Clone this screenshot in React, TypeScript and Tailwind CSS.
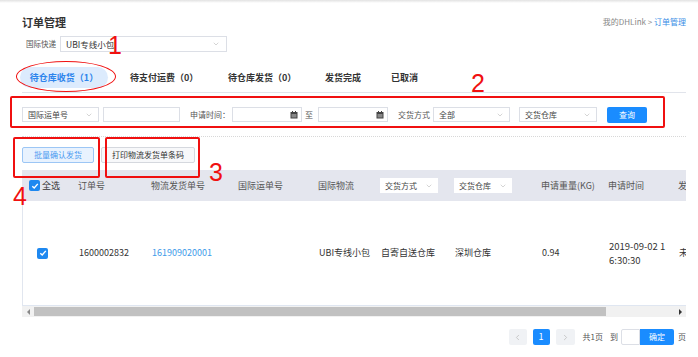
import React from "react";
import { ChevronDown, ChevronLeft, ChevronRight } from "lucide-react";

const Chev = () => <ChevronDown size={8} strokeWidth={1.5} color="#aaa" />;

const Cal = () => (
  <svg width="8" height="8" viewBox="0 0 8 8">
    <rect x="0.5" y="1" width="7" height="6.5" fill="#444" />
    <rect x="1.5" y="3" width="5" height="3.5" fill="#888" />
    <rect x="2" y="0" width="1" height="2" fill="#444" />
    <rect x="5" y="0" width="1" height="2" fill="#444" />
  </svg>
);

const Check = ({ size = 11 }: { size?: number }) => (
  <div
    className="flex items-center justify-center rounded-[2px] bg-[#1e88f0]"
    style={{ width: size, height: size }}
  >
    <svg width="8" height="8" viewBox="0 0 8 8">
      <path d="M1.3 4.2 L3.2 6 L6.8 1.9" stroke="#fff" strokeWidth="1.4" fill="none" />
    </svg>
  </div>
);

const Select = ({ w, text, cls = "" }: { w: string; text: string; cls?: string }) => (
  <div className={`flex h-full items-center justify-between border border-[#dcdfe6] bg-white pl-[5px] pr-[5px] ${w} ${cls}`}>
    <span className="text-[8px] leading-none text-[#444]">{text}</span>
    <Chev />
  </div>
);

const DateInput = () => (
  <div className="flex h-full w-[70px] items-center justify-end border border-[#dcdfe6] bg-white pr-[3px]">
    <Cal />
  </div>
);

const cols = [56, 73, 87, 80, 62, 74, 87, 67, 70, 60];

export default function App() {
  return (
    <div className="relative h-[357px] w-[698px] overflow-hidden bg-white font-['Noto_Sans_CJK_SC','Noto_Sans',sans-serif] text-[#333]">
      <div className="h-[3px] bg-linear-to-b from-[#e2e2e2] to-white" />
      <div className="pl-[22px] pr-[12px]">
        {/* title row */}
        <div className="mt-[11px] flex h-[16px] items-center justify-between">
          <span className="text-[11px] font-bold leading-none text-[#333]">订单管理</span>
          <span className="text-[8px] leading-none text-[#888]">
            我的DHLink &gt; <span className="text-[#3a8ee6]">订单管理</span>
          </span>
        </div>
        {/* express row */}
        <div className="mt-[6px] flex h-[16px] items-center pl-[4px]">
          <span className="w-[34px] text-[7.5px] leading-none text-[#555]">国际快递</span>
          <div className="flex h-full w-[167px] items-center justify-between border border-[#dcdfe6] pl-[5px] pr-[6px]">
            <span className="text-[8.5px] leading-none text-[#333]">UBI专线小包</span>
            <Chev />
          </div>
        </div>
        {/* tabs */}
        <div className="mt-[15px] flex h-[21px] items-center text-[9px] font-bold">
          <div className="-ml-[2px] flex h-full w-[88px] items-center justify-center rounded-full bg-[#dcebfd] text-[#2d84ec]">
            待仓库收货（1）
          </div>
          <div className="ml-[22px] w-[98px]">待支付运费（0）</div>
          <div className="w-[97px]">待仓库发货（0）</div>
          <div className="w-[66px]">发货完成</div>
          <div>已取消</div>
        </div>
        <div className="mt-[4px] h-px bg-[#e1e4eb]" />
        {/* filter row */}
        <div className="mt-[14px] flex h-[15px] items-center text-[8px] text-[#555]">
          <Select w="w-[77px]" text="国际运单号" />
          <div className="ml-[4px] h-full w-[77px] border border-[#dcdfe6]" />
          <span className="ml-[10px] w-[42px] leading-none">申请时间：</span>
          <DateInput />
          <span className="ml-[3px] w-[13px] leading-none">至</span>
          <DateInput />
          <span className="ml-[10px] w-[35px] leading-none">交货方式</span>
          <Select w="w-[77px]" text="全部" />
          <Select w="w-[78px]" text="交货仓库" cls="ml-[9px]" />
          <div className="ml-[10px] flex h-[16px] w-[40px] items-center justify-center rounded-[2px] bg-[#1a8cff] text-[8px] text-white">
            查询
          </div>
        </div>
        <div className="mt-[14px] border-t border-dotted border-[#d8d8d8]" />
        {/* actions */}
        <div className="mt-[10px] flex h-[16px] items-center text-[8px]">
          <div className="flex h-full w-[72px] items-center justify-center rounded-[2px] border border-[#9cc6f5] bg-[#e8f2fe] text-[#4a9af0]">
            批量确认发货
          </div>
          <div className="ml-[7px] flex h-full w-[94px] items-center justify-center rounded-[2px] border border-[#d5d8de] bg-[#f7f8fa] text-[#333]">
            打印物流发货单条码
          </div>
        </div>
        {/* table */}
        <div className="mt-[7px] w-full overflow-hidden">
          <div className="flex h-[31px] w-[720px] items-center bg-[#e4e6ee] text-[9px] text-[#555]">
            <div className="flex items-center gap-[2px] pl-[7px]" style={{ width: cols[0] }}>
              <Check />
              <span className="text-[#333]">全选</span>
            </div>
            <div style={{ width: cols[1] }}>订单号</div>
            <div style={{ width: cols[2] }}>物流发货单号</div>
            <div style={{ width: cols[3] }}>国际运单号</div>
            <div style={{ width: cols[4] }}>国际物流</div>
            <div style={{ width: cols[5] }}>
              <div className="flex h-[15px] w-[58px] items-center justify-between bg-white pl-[5px] pr-[5px] text-[8px] text-[#444]">
                交货方式 <Chev />
              </div>
            </div>
            <div style={{ width: cols[6] }}>
              <div className="flex h-[15px] w-[58px] items-center justify-between bg-white pl-[5px] pr-[5px] text-[8px] text-[#444]">
                交货仓库 <Chev />
              </div>
            </div>
            <div style={{ width: cols[7] }}>申请重量(KG)</div>
            <div style={{ width: cols[8] }}>申请时间</div>
            <div style={{ width: cols[9] }}>发货状态</div>
          </div>
          <div className="flex h-[104px] w-[720px] items-center border-l border-[#e1e6ef] text-[9px] text-[#333]">
            <div className="pl-[14px]" style={{ width: cols[0] }}>
              <Check />
            </div>
            <div style={{ width: cols[1] }}>1600002832</div>
            <div className="text-[#3d9be9]" style={{ width: cols[2] }}>161909020001</div>
            <div style={{ width: cols[3] }}></div>
            <div style={{ width: cols[4] }}>UBI专线小包</div>
            <div style={{ width: cols[5] }}>自寄自送仓库</div>
            <div style={{ width: cols[6] }}>深圳仓库</div>
            <div style={{ width: cols[7] }}>0.94</div>
            <div style={{ width: cols[8] }}>
              <div className="w-[60px] break-all text-[9.5px] leading-[14px]">2019-09-02 16:30:30</div>
            </div>
            <div style={{ width: cols[9] }}>未发货</div>
          </div>
          <div className="h-px bg-[#dfe6f1]" />
          {/* fake scrollbar */}
          <div className="flex h-[11px] items-center bg-[#f1f1f1]">
            <div className="flex h-full w-[12px] items-center justify-center">
              <div className="h-0 w-0 border-y-[3px] border-r-[3px] border-y-transparent border-r-[#888]" />
            </div>
            <div className="h-[9px] w-[572px] bg-[#c1c1c1]" />
            <div className="flex-1" />
            <div className="flex h-full w-[12px] items-center justify-center">
              <div className="h-0 w-0 border-y-[3px] border-l-[3px] border-y-transparent border-l-[#333]" />
            </div>
          </div>
        </div>
        {/* pagination */}
        <div className="mt-[12px] flex h-[16px] items-center justify-end text-[8px] text-[#555]">
          <div className="flex h-full w-[18px] items-center justify-center rounded-[2px] bg-[#f0f2f5]">
            <ChevronLeft size={9} color="#bbb" />
          </div>
          <div className="ml-[6px] flex h-full w-[17px] items-center justify-center rounded-[2px] bg-[#1a8cff] text-[9px] text-white">
            1
          </div>
          <div className="ml-[6px] flex h-full w-[19px] items-center justify-center rounded-[2px] bg-[#f0f2f5]">
            <ChevronRight size={9} color="#bbb" />
          </div>
          <span className="ml-[8px]">共1页</span>
          <span className="ml-[7px]">到</span>
          <div className="ml-[3px] h-full w-[19px] rounded-l-[2px] border border-[#dcdfe6]" />
          <div className="flex h-full w-[34px] items-center justify-center rounded-r-[2px] bg-[#1a8cff] text-white">
            确定
          </div>
          <span className="ml-[4px]">页</span>
        </div>
      </div>

      {/* annotations */}
      <div className="absolute left-[16px] top-[61px] h-[31px] w-[100px] rounded-[50%] border-[1.5px] border-[#f01010]" />
      <div className="absolute left-[10px] top-[96px] h-[32px] w-[655px] rounded-[2px] border-2 border-[#f01010]" />
      <div className="absolute left-[13px] top-[137px] h-[41px] w-[87px] rounded-[2px] border-2 border-[#f01010]" />
      <div className="absolute left-[105px] top-[137px] h-[41px] w-[95px] rounded-[2px] border-2 border-[#f01010]" />
      <div className="absolute left-[108px] top-[33px] font-['Liberation_Sans',sans-serif] text-[25px] leading-none text-[#f01010]">1</div>
      <div className="absolute left-[471px] top-[71px] font-['Liberation_Sans',sans-serif] text-[25px] leading-none text-[#f01010]">2</div>
      <div className="absolute left-[209px] top-[160px] font-['Liberation_Sans',sans-serif] text-[25px] leading-none text-[#f01010]">3</div>
      <div className="absolute left-[13px] top-[184px] font-['Liberation_Sans',sans-serif] text-[25px] leading-none text-[#f01010]">4</div>
    </div>
  );
}
